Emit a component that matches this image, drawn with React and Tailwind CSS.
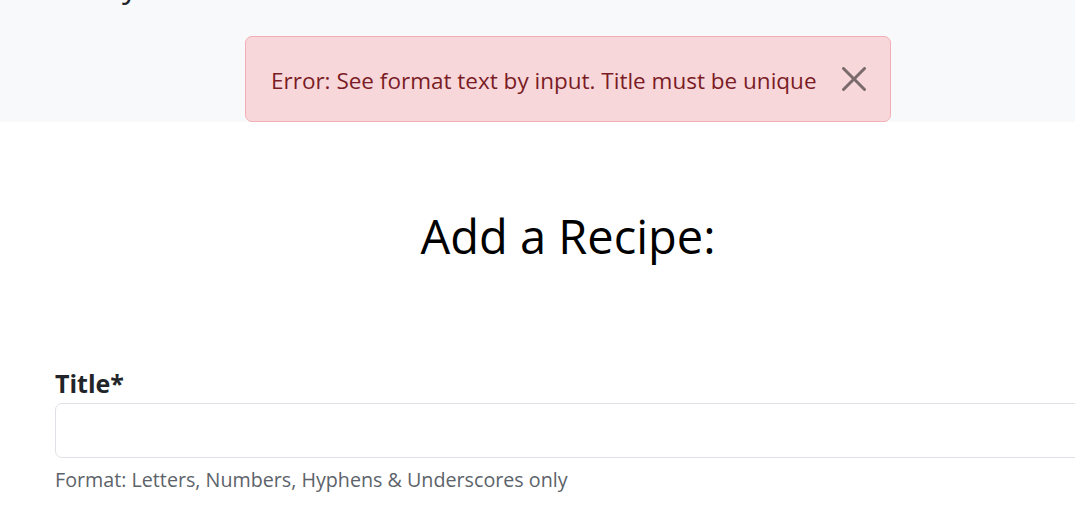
import React from "react";

export default function App() {
  return (
    <div className="w-[1075px] h-[514px] overflow-hidden bg-white" style={{ fontFamily: '"Open Sans", "Noto Sans", sans-serif' }}>
      <div className="w-[1136px]">
        <div className="h-[122px] bg-[#f8f9fa] flex flex-col items-center relative">
          <div className="absolute left-[122px] top-[-31px] text-[32px] leading-none text-[#212529]">y</div>
          <div className="mt-[36px] w-[646px] h-[86px] bg-[#f8d7da] border border-[#f1aeb5] rounded-[7px] flex items-center pl-[25px] pr-[24px] pt-[3px] justify-between">
            <span className="text-[#7a1c25] text-[22.5px] whitespace-nowrap">Error: See format text by input. Title must be unique</span>
            <svg width="24" height="24" viewBox="0 0 16 16" className="opacity-50 -mt-[3px]">
              <path fill="#000" d="M.293.293a1 1 0 0 1 1.414 0L8 6.586 14.293.293a1 1 0 1 1 1.414 1.414L9.414 8l6.293 6.293a1 1 0 0 1-1.414 1.414L8 9.414l-6.293 6.293a1 1 0 0 1-1.414-1.414L6.586 8 .293 1.707a1 1 0 0 1 0-1.414z" />
            </svg>
          </div>
        </div>
        <h1 className="text-center text-[47px] leading-none text-black mt-[91px]">Add a Recipe:</h1>
        <div className="pl-[55px] mt-[109px]">
          <label className="block text-[25px] font-bold text-[#212529] leading-[28px]">Title*</label>
          <div className="mt-[6px] h-[55px] border border-[#dee2e6] rounded-[7px] bg-white"></div>
          <div className="mt-[8px] text-[19.7px] text-[#5c636a] leading-[28px] whitespace-nowrap">Format: Letters, Numbers, Hyphens &amp; Underscores only</div>
        </div>
      </div>
    </div>
  );
}
